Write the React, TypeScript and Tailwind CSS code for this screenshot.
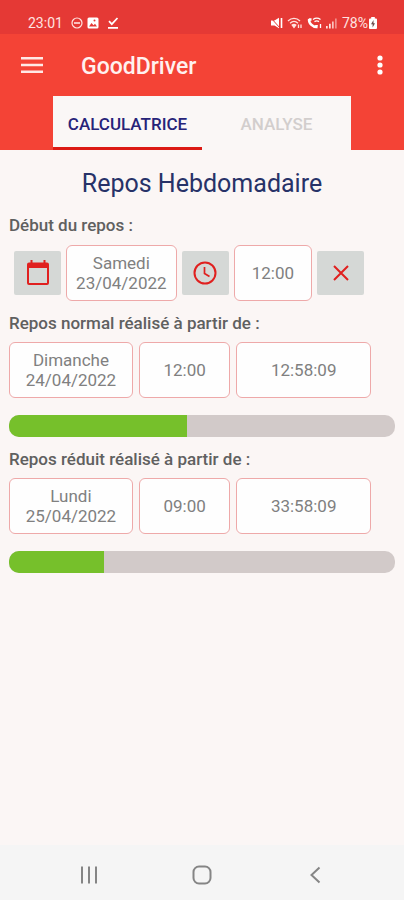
import { useState } from 'react';
import clsx from 'clsx';

const tabs = ['Calculatrice', 'Analyse'];

const rests = [
  { id: 'normal', label: 'Repos normal réalisé à partir de :', day: 'Dimanche', date: '24/04/2022', time: '12:00', left: '12:58:09', progress: 46 },
  { id: 'reduced', label: 'Repos réduit réalisé à partir de :', day: 'Lundi', date: '25/04/2022', time: '09:00', left: '33:58:09', progress: 24.6 },
];

const boxClass =
  'flex h-14 min-w-0 items-center justify-center rounded-md border border-[#eea9a9] bg-[#fefefe] text-center text-[17px] leading-5 text-[#808080]';

const pickerClass = 'flex h-11 w-[47px] shrink-0 items-center justify-center rounded-xs bg-[#d5d8d6] text-[#e0201f]';

function StatusBar() {
  return (
    <div className="flex h-[34px] items-center justify-between bg-[#e53935] pt-3 pr-[26px] pl-7 text-sm text-[#ffe3e0]">
      <div className="flex items-center gap-2">
        <span>23:01</span>
        <svg width="12" height="12" viewBox="0 0 12 12" fill="none" stroke="currentColor" strokeWidth="1.2">
          <circle cx="6" cy="6" r="5" />
          <path d="M3 6h6" strokeWidth="1.6" />
        </svg>
        <svg className="-ml-1" width="12" height="12" viewBox="0 0 12 12">
          <rect x="0.5" y="0.5" width="11" height="11" rx="1.5" fill="#fff" />
          <path d="M2 9.5 4.5 6l2 2.3L8 6.8l2 2.7z" fill="#e53935" />
          <circle cx="7.5" cy="3.6" r="1" fill="#e53935" />
        </svg>
        <svg width="12" height="12" viewBox="0 0 12 12" fill="none" stroke="#fff" strokeWidth="1.7">
          <path d="M2 4.2 4.8 7.2 10.5 1M1 10.8h10" />
        </svg>
      </div>

      <div className="flex items-center gap-1">
        <svg width="12" height="12" viewBox="0 0 12 12">
          <path d="M0 3.5h3.500L8 .8v10.400L3.500 8.500H0z" fill="#fff" />
          <path d="M10.500 1v10" fill="none" stroke="#fff" strokeWidth="1.6" />
          <path d="M0 1l9 10" fill="none" stroke="#e53935" strokeWidth="1" />
        </svg>
        <svg width="16" height="12" viewBox="0 0 16 12" fill="none" stroke="currentColor" strokeWidth="1.3">
          <path d="M1 4c3.500-3.500 8.500-3.500 12 0M3 6.200c2.500-2.200 5.500-2.200 8 0M5 8.300c1.300-1 2.700-1 4 0" />
          <path d="M5.500 8.500h3L7 10.500z" fill="currentColor" />
          <path d="M11.500 11V7.500M14 7.500V11" />
        </svg>
        <svg width="15" height="12" viewBox="0 0 15 12" fill="none" stroke="#fff">
          <path d="M2.200 2C1.500 6 5.500 10.500 10.500 10" strokeWidth="2.6" />
          <path d="M2 2.500h2.500M9.500 9.600V8" strokeWidth="2.6" />
          <path d="M6 2.500c2.500-1.800 5-1.800 7.500 0M7.500 4.600c1.500-1 3-1 4.500 0M13.500 7v4" strokeWidth="1.3" />
        </svg>
        <svg width="12" height="12" viewBox="0 0 12 12" fill="currentColor">
          <path d="M0 9h1.700v2.500H0zM3 6.800h1.700v4.700H3z" />
          <path d="M6 4.500h1.700v7H6z" opacity=".8" />
          <path d="M9 1.500h1.700v10H9z" opacity=".5" />
        </svg>
        <span>78%</span>
        <svg className="-ml-1" width="10" height="12" viewBox="0 0 10 12">
          <path d="M3.200 0h3.600v1.500H8A1 1 0 0 1 9 2.500V11a1 1 0 0 1-1 1H2a1 1 0 0 1-1-1V2.500a1 1 0 0 1 1-1h1.200z" fill="#fff" />
          <path d="M5.500 3 3 7.200h1.600V10.500L7 6.200H5.500z" fill="#6b4a4a" />
        </svg>
      </div>
    </div>
  );
}

function AppBar() {
  return (
    <div className="flex h-[62px] items-center pt-1 pr-3 pb-1 pl-5">
      <button type="button" aria-label="Menu" className="text-[#ffe9e6]">
        <svg width="24" height="18" viewBox="0 0 24 18" stroke="currentColor" strokeWidth="2.5">
          <path d="M1 2.200h22M1 9h22M1 15.800h22" />
        </svg>
      </button>
      <h1 className="ml-[37px] flex-1 pt-1 text-[23px] font-medium text-[#fff1ef]">GoodDriver</h1>
      <button type="button" aria-label="Plus d'options" className="flex w-6 justify-center text-white">
        <svg width="6" height="20" viewBox="0 0 6 20" fill="currentColor">
          <circle cx="3" cy="3" r="2.6" />
          <circle cx="3" cy="10" r="2.6" />
          <circle cx="3" cy="17" r="2.6" />
        </svg>
      </button>
    </div>
  );
}

export default function App() {
  const [active, setActive] = useState(0);

  return (
    <div className="flex min-h-screen flex-col bg-[#fbf6f5] font-[Roboto,sans-serif]">
      <StatusBar />

      <header className="bg-[#f44336]">
        <AppBar />
        <div role="tablist" className="mx-[53px] flex bg-[#faf7f6]">
          {tabs.map((tab, i) => (
            <button
              key={tab}
              type="button"
              role="tab"
              aria-selected={active === i}
              onClick={() => setActive(i)}
              className={clsx(
                'h-[54px] flex-1 border-b-3 pt-[6px] text-[17px] font-medium uppercase',
                active === i ? 'border-[#dc1a14] text-[#262379]' : 'border-transparent text-[#d2cecd]'
              )}
            >
              {tab}
            </button>
          ))}
        </div>
      </header>

      <main className="flex-1 px-[9px] pt-[18px]">
        <h2 className="text-center text-[25px] leading-8 text-[#273268]">Repos Hebdomadaire</h2>

        {/* start of the rest */}
        <section className="pt-[15px]">
          <h3 className="text-[17px] leading-5 font-medium text-[#606060]">Début du repos :</h3>
          <div className="mt-[10px] mr-[31px] ml-[5px] flex items-center gap-[5px]">
            <button type="button" aria-label="Choisir la date" className={pickerClass}>
              <svg width="24" height="26" viewBox="0 0 24 26" fill="currentColor">
                <path d="M4.500 0h2v2.500h11V0h2v2.500h1.500a2 2 0 0 1 2 2V23a2 2 0 0 1-2 2H3a2 2 0 0 1-2-2V4.500a2 2 0 0 1 2-2h1.500zM3 8v15h18V8z" />
              </svg>
            </button>
            <output className={clsx(boxClass, 'flex-[111]')}>
              <span>
                Samedi
                <br />
                23/04/2022
              </span>
            </output>
            <button type="button" aria-label="Choisir l'heure" className={pickerClass}>
              <svg width="24" height="24" viewBox="0 0 24 24" fill="none" stroke="currentColor" strokeWidth="2">
                <circle cx="12" cy="12" r="10.5" />
                <path d="M11.500 6v6.500l5 3" strokeWidth="1.7" />
              </svg>
            </button>
            <output className={clsx(boxClass, 'flex-[78]')}>12:00</output>
            <button type="button" aria-label="Effacer" className={pickerClass}>
              <svg width="18" height="18" viewBox="0 0 18 18" fill="none" stroke="currentColor" strokeWidth="2">
                <path d="M2 2l14 14M16 2 2 16" />
              </svg>
            </button>
          </div>
        </section>

        {rests.map((rest) => (
          <section key={rest.id} className="pt-3">
            <h3 id={rest.id} className="text-[17px] leading-5 font-medium text-[#606060]">
              {rest.label}
            </h3>
            <div className="mt-[9px] mr-6 flex gap-[6px]">
              <output className={clsx(boxClass, 'flex-[124]')}>
                <span>
                  {rest.day}
                  <br />
                  {rest.date}
                </span>
              </output>
              <output className={clsx(boxClass, 'flex-[91]')}>{rest.time}</output>
              <output className={clsx(boxClass, 'flex-[135]')}>{rest.left}</output>
            </div>
            <div
              role="progressbar"
              aria-labelledby={rest.id}
              aria-valuenow={rest.progress}
              className="mt-[17px] h-[22px] overflow-hidden rounded-[10px] bg-[#d2cac9]"
            >
              <div className="h-full bg-[#76c02b]" style={{ width: `${rest.progress}%` }} />
            </div>
          </section>
        ))}
      </main>

      {/* system navigation */}
      <nav className="flex h-[55px] items-center bg-[#f5f5f5] px-8 pt-1 text-[#858585]">
        <button type="button" aria-label="Applications récentes" className="flex flex-1 justify-center">
          <svg width="18" height="18" viewBox="0 0 18 18" stroke="currentColor" strokeWidth="2">
            <path d="M2 .5v17M9 .5v17M16 .5v17" />
          </svg>
        </button>
        <button type="button" aria-label="Accueil" className="flex flex-1 justify-center">
          <svg width="20" height="20" viewBox="0 0 20 20" fill="none" stroke="currentColor" strokeWidth="2">
            <rect x="1.5" y="1.5" width="17" height="17" rx="5.5" />
          </svg>
        </button>
        <button type="button" aria-label="Retour" className="flex flex-1 justify-center">
          <svg width="12" height="18" viewBox="0 0 12 18" fill="none" stroke="currentColor" strokeWidth="2">
            <path d="M10.500 1.500 2.500 9l8 7.500" />
          </svg>
        </button>
      </nav>
    </div>
  );
}
